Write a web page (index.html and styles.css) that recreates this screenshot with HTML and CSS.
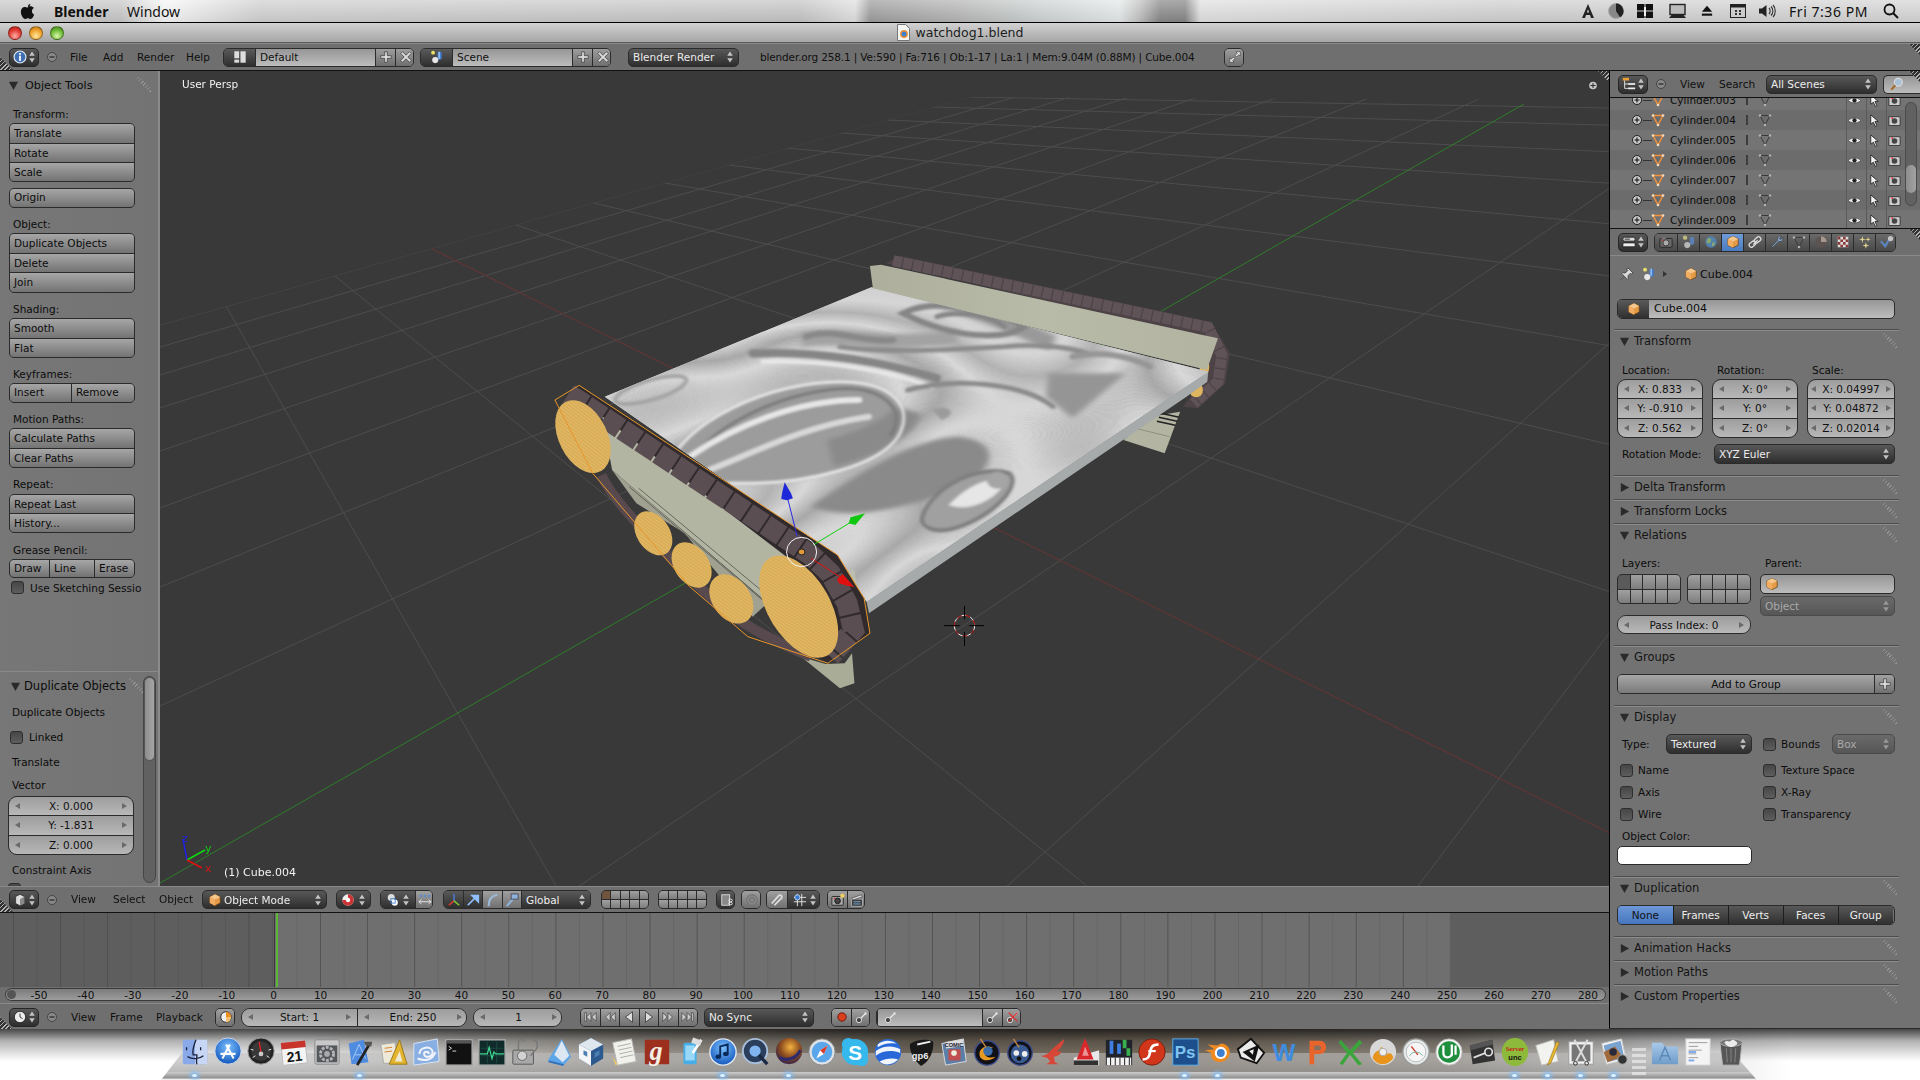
FILE: index.html
```html
<!DOCTYPE html>
<html lang="en">
<head>
<meta charset="utf-8">
<title>watchdog1.blend</title>
<link rel="stylesheet" href="styles.css">
</head>
<body>
<svg class="defs" width="0" height="0" aria-hidden="true">
  <defs>
    <pattern id="pWheel" width="7" height="7" patternUnits="userSpaceOnUse" patternTransform="rotate(62)"><rect width="7" height="7" fill="#dfb55f"/><path d="M0 2h7" stroke="#cd9d47" stroke-width="1.600"/><path d="M0 5h7" stroke="#e8c070" stroke-width="1.200"/></pattern>
    <linearGradient id="gRail" x1="0" y1="0" x2="1" y2="0"><stop offset="0" stop-color="#adaf9c"/><stop offset=".5" stop-color="#b9bba9"/><stop offset="1" stop-color="#b2b4a1"/></linearGradient>
    <linearGradient id="gFolder" x1="0" y1="0" x2="0" y2="1"><stop offset="0" stop-color="#a9c9ea"/><stop offset="1" stop-color="#6f9cc9"/></linearGradient>
    <radialGradient id="gBlue" cx=".5" cy=".35" r=".7"><stop offset="0" stop-color="#7cc0ff"/><stop offset="1" stop-color="#0b4fb8"/></radialGradient>
    <radialGradient id="gOrb" cx=".55" cy=".35" r=".7"><stop offset="0" stop-color="#f4b040"/><stop offset=".55" stop-color="#8a4a1e"/><stop offset="1" stop-color="#2a2050"/></radialGradient>
    <filter id="b3"><feGaussianBlur stdDeviation="3"/></filter>
    <filter id="b6"><feGaussianBlur stdDeviation="7"/></filter>
    <filter id="marble" x="0" y="0" width="100%" height="100%" color-interpolation-filters="sRGB">
      <feTurbulence type="fractalNoise" baseFrequency=".0024 .0032" numOctaves="1" seed="11"/>
      <feColorMatrix type="matrix" values="1 0 0 0 0  1 0 0 0 0  1 0 0 0 0  0 0 0 0 1"/>
      <feComponentTransfer>
        <feFuncR type="table" tableValues=".82 .82 .82 .8 .84 .7 .85 .66 .85 .72 .84 .82 .82"/>
        <feFuncG type="table" tableValues=".82 .82 .82 .8 .84 .7 .85 .66 .85 .72 .84 .82 .82"/>
        <feFuncB type="table" tableValues=".82 .82 .82 .8 .84 .7 .85 .66 .85 .72 .84 .82 .82"/>
      </feComponentTransfer>
    </filter>
    <clipPath id="sheetClip"><polygon points="175,470 725,142 1420,395 715,1085 660,960"/></clipPath>
    <clipPath id="gridClip"><polygon points="160,325 970,97 1609,100 1609,886 160,886"/></clipPath>

    <symbol id="ud" viewBox="0 0 10 16"><path d="M5 1l3.5 5.5h-7zM5 15l-3.5-5.500h7z" fill="#c4c4c4"/></symbol>
    <symbol id="udg" viewBox="0 0 10 16"><path d="M5 1l3.5 5.5h-7zM5 15l-3.5-5.500h7z" fill="#999"/></symbol>
    <symbol id="minus" viewBox="0 0 12 12"><circle cx="6" cy="6" r="4.500" fill="#888" stroke="#444"/><rect x="3.500" y="5.300" width="5" height="1.400" fill="#333"/></symbol>
    <symbol id="info" viewBox="0 0 16 16"><circle cx="8" cy="8" r="6.800" fill="#3f6fb0" stroke="#dfe8f5" stroke-width="1.300"/><rect x="7" y="3.500" width="2" height="2" fill="#fff"/><rect x="7" y="6.500" width="2" height="6" fill="#fff"/></symbol>
    <symbol id="layout" viewBox="0 0 16 16"><rect x="1.500" y="1.500" width="5.500" height="8" fill="#ddd"/><rect x="1.500" y="11" width="5.500" height="3.500" fill="#ddd"/><rect x="8.500" y="1.500" width="6" height="13" fill="#ddd"/></symbol>
    <symbol id="scene" viewBox="0 0 16 16"><circle cx="3.500" cy="3" r="2.200" fill="#e9e36b"/><rect x="8.500" y="2" width="5" height="9" rx="2" fill="#3f78c8"/><rect x="9.500" y="2" width="2" height="8" fill="#8fbaf0"/><circle cx="6" cy="11.500" r="3.500" fill="#e8e8e8"/></symbol>
    <symbol id="plus" viewBox="0 0 16 16"><path d="M6.500 2h3v4.500H14v3H9.500V14h-3V9.500H2v-3h4.500z" fill="#ddd" stroke="#333" stroke-width=".8"/></symbol>
    <symbol id="xx" viewBox="0 0 16 16"><path d="M4 2l4 4 4-4 2 2-4 4 4 4-2 2-4-4-4 4-2-2 4-4-4-4z" fill="#ddd" stroke="#333" stroke-width=".8"/></symbol>
    <symbol id="expand" viewBox="0 0 16 16"><path d="M9 2h5v5l-1.700-1.700-2.500 2.500-1.600-1.600 2.500-2.500zM7 14H2V9l1.700 1.700 2.500-2.500 1.600 1.600-2.500 2.500z" fill="#eee" stroke="#333" stroke-width=".7"/></symbol>
    <symbol id="triR" viewBox="0 0 12 12"><path d="M2 1l9 5-9 5z" fill="#2a2a2a"/></symbol>
    <symbol id="triD" viewBox="0 0 12 12"><path d="M1 2h10l-5 9z" fill="#2a2a2a"/></symbol>
    <symbol id="cube" viewBox="0 0 16 16"><path d="M2 4.500L8 1.500l6 3v7L8 14.500l-6-3z" fill="#e59a45" stroke="#5a3c18" stroke-width=".8"/><path d="M2 4.500l6 3 6-3-6-3z" fill="#f4c78d"/><path d="M8 7.500v7L2 11.500v-7z" fill="#f1ad62"/></symbol>
    <symbol id="cubeg" viewBox="0 0 16 16"><path d="M3 4L8 1.500 13 4v8l-5 2.500L3 12z" fill="#ddd" stroke="#222" stroke-width=".8"/><path d="M8 7v7.500L13 12V4z" fill="#888"/></symbol>
    <symbol id="plusc" viewBox="0 0 12 12"><circle cx="6" cy="6" r="4.500" fill="#c9c9c9" stroke="#222"/><path d="M3.500 6h5M6 3.500v5" stroke="#111" stroke-width="1.100"/></symbol>
    <symbol id="triO" viewBox="0 0 14 14"><path d="M2 2.500h10L7 12z" fill="none" stroke="#f0913a" stroke-width="1.500"/><circle cx="2" cy="2.500" r="1.300" fill="#f3dcc0"/><circle cx="12" cy="2.500" r="1.300" fill="#f3dcc0"/><circle cx="7" cy="12" r="1.300" fill="#f3dcc0"/></symbol>
    <symbol id="triG" viewBox="0 0 14 14"><path d="M2 2.500h10L7 12z" fill="none" stroke="#3a3a3a" stroke-width="1"/><circle cx="2" cy="2.500" r="1.200" fill="#b5b5b5"/><circle cx="12" cy="2.500" r="1.200" fill="#b5b5b5"/><circle cx="7" cy="12" r="1.200" fill="#b5b5b5"/></symbol>
    <symbol id="eye" viewBox="0 0 14 14"><path d="M0.500 7C3 3.500 11 3.500 13.500 7 11 10.500 3 10.500.5 7z" fill="#eee" stroke="#333" stroke-width=".6"/><circle cx="7" cy="7" r="2.300" fill="#222"/></symbol>
    <symbol id="cursor" viewBox="0 0 14 14"><path d="M3 1l8 7H7.500l2 4.500-1.700.800-2-4.500L3 11z" fill="#f4f4f4" stroke="#111" stroke-width=".8"/></symbol>
    <symbol id="rcam" viewBox="0 0 14 14"><rect x="1" y="3" width="12" height="9.500" fill="#ccc" stroke="#222" stroke-width=".8"/><circle cx="7" cy="7.500" r="3" fill="#444"/><circle cx="4.500" cy="4.500" r="1" fill="#d33"/></symbol>
    <symbol id="tabs" viewBox="0 0 16 16"><rect x="1" y="2.500" width="14" height="4.500" rx="2" fill="#ddd" stroke="#222"/><rect x="1" y="9" width="14" height="4.500" rx="1" fill="#eee" stroke="#222"/><rect x="3" y="4" width="6" height="1.500" fill="#555"/></symbol>
    <symbol id="outl" viewBox="0 0 16 16"><rect x="1" y="1" width="7" height="3" fill="#f0a030"/><path d="M3 4v9h4M3 8h4" stroke="#eee" fill="none"/><rect x="7" y="7" width="8" height="2" fill="#eee"/><rect x="7" y="12" width="8" height="2" fill="#eee"/></symbol>
    <symbol id="tcam" viewBox="0 0 16 16"><rect x="1" y="4" width="14" height="10" rx="1" fill="#6a6a6a" stroke="#222"/><rect x="3" y="2.500" width="5" height="2" fill="#777"/><circle cx="8" cy="9" r="3.500" fill="#aaa" stroke="#333"/><circle cx="4" cy="6" r=".8" fill="#d33"/></symbol>
    <symbol id="tscene" viewBox="0 0 16 16"><circle cx="3.500" cy="3" r="2.500" fill="#c9c47e" opacity=".9"/><rect x="9" y="2" width="5" height="9" rx="2" fill="#5a80b4"/><circle cx="6" cy="11.500" r="3.500" fill="#b8b8b8"/></symbol>
    <symbol id="tworld" viewBox="0 0 16 16"><circle cx="8" cy="8" r="6.500" fill="#5380ac"/><path d="M4 4c3-1 5 0 4 3s-4 3-5 1zM10 8c2 0 3 1 2 3s-3 2-3 0z" fill="#8aa86c"/></symbol>
    <symbol id="tlink" viewBox="0 0 16 16"><path d="M6 11l5-5" stroke="#ddd" stroke-width="1.500"/><rect x="1" y="8" width="8" height="5" rx="2.500" fill="none" stroke="#ddd" stroke-width="1.500" transform="rotate(-40 5 10.500)"/><rect x="7" y="3" width="8" height="5" rx="2.500" fill="none" stroke="#ddd" stroke-width="1.500" transform="rotate(-40 11 5.500)"/></symbol>
    <symbol id="twrench" viewBox="0 0 16 16"><path d="M2 13l7-7c-1-3 1-5 4-4.500L10.500 4l1.500 1.500 2.500-2.500c.5 3-1.500 5-4.500 4l-7 7z" fill="#8fb0da" stroke="#222" stroke-width=".5"/></symbol>
    <symbol id="tmat" viewBox="0 0 16 16"><circle cx="8" cy="8" r="6.500" fill="#5b5350"/><path d="M8 1.500A6.500 6.500 0 0 1 14.500 8H8z" fill="#a8988f"/></symbol>
    <symbol id="ttex" viewBox="0 0 16 16"><rect x="2" y="2" width="12" height="12" fill="#ddd"/><path d="M2 2h3v3H2zM8 2h3v3H8zM5 5h3v3H5zM11 5h3v3h-3zM2 8h3v3H2zM8 8h3v3H8zM5 11h3v3H5zM11 11h3v3h-3z" fill="#8b3a3a"/></symbol>
    <symbol id="tpart" viewBox="0 0 16 16"><path d="M5 1l.8 3.200L9 5l-3.200.8L5 9l-.8-3.200L1 5l3.200-.8zM11.500 2l.6 2.400 2.400.6-2.400.6-.6 2.400-.6-2.400L8.500 5l2.400-.6zM9 8l.8 3.200 3.200.8-3.200.8L9 16l-.8-3.200L5 12l3.200-.8z" fill="#e3d58f"/></symbol>
    <symbol id="tphys" viewBox="0 0 16 16"><path d="M1 7l5 6L11 4" fill="none" stroke="#5b86c0" stroke-width="2.500"/><circle cx="12" cy="4" r="3" fill="#c5c5c5"/></symbol>
    <symbol id="pin" viewBox="0 0 16 16"><path d="M9 1l6 6-2 1-1-1-3 3 .5 3-1 1-3-3-4 4-.5-.5 4-4-3-3 1-1 3 .5 3-3-1-1z" fill="#ddd" stroke="#222" stroke-width=".7"/></symbol>
    <symbol id="sphere" viewBox="0 0 16 16"><circle cx="8" cy="8" r="6.500" fill="#efefef"/><path d="M8 1.500a6.500 6.500 0 0 1 0 13zM1.500 8a6.500 6.500 0 0 0 6.500 6.500V8z" fill="#c33"/><circle cx="8" cy="8" r="2.500" fill="#fff"/></symbol>
    <symbol id="pivot" viewBox="0 0 16 16"><circle cx="6" cy="5" r="4" fill="#ddd"/><circle cx="10" cy="11" r="3.500" fill="#fff"/><rect x="5.500" y="6.500" width="5" height="5" fill="none" stroke="#3a7ad0"/></symbol>
    <symbol id="align" viewBox="0 0 16 16"><rect x="2" y="2" width="2.500" height="2.500" fill="#5a8ad0"/><rect x="6.700" y="2" width="2.500" height="2.500" fill="#5a8ad0"/><rect x="11.500" y="2" width="2.500" height="2.500" fill="#5a8ad0"/><path d="M1 10h14M1 10l3-2.500M1 10l3 2.500M15 10l-3-2.500M15 10l-3 2.500" stroke="#eee" fill="none"/></symbol>
    <symbol id="manip" viewBox="0 0 16 16"><path d="M8 9V1" stroke="#4a7be0" stroke-width="1.600"/><path d="M8 9L2 14" stroke="#e03a2a" stroke-width="1.600"/><path d="M8 9l6 5" stroke="#7cd030" stroke-width="1.600"/></symbol>
    <symbol id="arrowm" viewBox="0 0 16 16"><path d="M2 14L10 6M7 3h7v7z" stroke="#8fc0ff" fill="#8fc0ff" stroke-width="2"/></symbol>
    <symbol id="rotm" viewBox="0 0 16 16"><path d="M3 15C3 8 6 3 13 2" fill="none" stroke="#9ab8d8" stroke-width="2.500"/></symbol>
    <symbol id="scalem" viewBox="0 0 16 16"><path d="M2 15L9 7" stroke="#8fb2dc" stroke-width="2.500"/><rect x="7" y="1" width="8" height="6" fill="#8fb2dc" stroke="#445"/></symbol>
    <symbol id="lock3d" viewBox="0 0 16 16"><rect x="2" y="2" width="9" height="12" fill="#888" stroke="#ddd"/><rect x="10" y="7" width="4" height="3" rx="1.500" fill="none" stroke="#eee"/><rect x="10" y="10.500" width="4" height="3" rx="1.500" fill="none" stroke="#eee"/></symbol>
    <symbol id="prop" viewBox="0 0 16 16"><circle cx="8" cy="8" r="6" fill="#8a8a8a" stroke="#777" stroke-width="1.500"/><circle cx="8" cy="8" r="2.800" fill="none" stroke="#666"/></symbol>
    <symbol id="magnet" viewBox="0 0 16 16"><path d="M3 13L11 4c3-2 5 2 2 4l-7 7" fill="none" stroke="#ddd" stroke-width="2" transform="translate(-1 -1)"/></symbol>
    <symbol id="snap" viewBox="0 0 16 16"><path d="M5 1v14M10 1v14M1 5h14M1 10h14" stroke="#eee"/><circle cx="5" cy="5" r="3" fill="#3a7ad0" stroke="#cde"/></symbol>
    <symbol id="renderc" viewBox="0 0 16 16"><rect x="1" y="4" width="13" height="10" rx="1" fill="#aaa" stroke="#222"/><circle cx="7.500" cy="9" r="3.200" fill="#444" stroke="#111"/><circle cx="4" cy="6" r="1" fill="#d33"/><circle cx="13" cy="3" r="2.500" fill="#ecd060"/></symbol>
    <symbol id="clap" viewBox="0 0 16 16"><rect x="2" y="7" width="12" height="8" fill="#3d3d3d" stroke="#ddd" stroke-width=".6"/><path d="M2 6l11-4 1 2.500L3 8z" fill="#ddd" stroke="#222" stroke-width=".6"/><path d="M4 10h8M4 12.500h8" stroke="#7ab0e0"/></symbol>
    <symbol id="clock" viewBox="0 0 16 16"><circle cx="8" cy="8" r="6.500" fill="#eee" stroke="#222"/><path d="M8 4v4l3 2" stroke="#222" fill="none"/></symbol>
    <symbol id="pie" viewBox="0 0 16 16"><circle cx="8" cy="8" r="6" fill="#eee" stroke="#222"/><path d="M8 2a6 6 0 0 1 6 6H8z" fill="#ee9020"/><path d="M8 8h6a6 6 0 0 1-6 6z" fill="#f3c070"/></symbol>
    <symbol id="tfirst" viewBox="0 0 16 16"><path d="M2 3h2v10H2zM9 3v10L4 8zM15 3v10L10 8z" fill="#ccc" stroke="#222" stroke-width=".6"/></symbol>
    <symbol id="tprev" viewBox="0 0 16 16"><path d="M8 3v10L3 8zM14 3v10L9 8z" fill="#ccc" stroke="#222" stroke-width=".6"/></symbol>
    <symbol id="tback" viewBox="0 0 16 16"><path d="M12 2v12L4 8z" fill="#ddd" stroke="#222" stroke-width=".8"/></symbol>
    <symbol id="tplay" viewBox="0 0 16 16"><path d="M4 2v12l8-6z" fill="#ddd" stroke="#222" stroke-width=".8"/></symbol>
    <symbol id="tnext" viewBox="0 0 16 16"><path d="M8 3v10l5-5zM2 3v10l5-5z" fill="#ccc" stroke="#222" stroke-width=".6"/></symbol>
    <symbol id="tlast" viewBox="0 0 16 16"><path d="M12 3h2v10h-2zM7 3v10l5-5zM1 3v10l5-5z" fill="#ccc" stroke="#222" stroke-width=".6"/></symbol>
    <symbol id="rec" viewBox="0 0 16 16"><circle cx="8" cy="8" r="4.800" fill="#d8401c" stroke="#611"/></symbol>
    <symbol id="key" viewBox="0 0 16 16"><circle cx="4.500" cy="11.500" r="3" fill="#444" stroke="#eee"/><path d="M7 9l6-6M11 3l2 2" stroke="#eee" stroke-width="1.500"/></symbol>
    <symbol id="keyx" viewBox="0 0 16 16"><circle cx="4.500" cy="11.500" r="3" fill="#444" stroke="#eee"/><path d="M7 9l6-6" stroke="#eee" stroke-width="1.500"/><path d="M3 3l10 10M13 3L3 13" stroke="#d33" stroke-width="1.500"/></symbol>
    <symbol id="search" viewBox="0 0 16 16"><circle cx="9.500" cy="6" r="4.500" fill="#a8c0d8" stroke="#d9d9d9" stroke-width="1.400"/><path d="M6 9.500L1.500 14.500" stroke="#a56a2a" stroke-width="2.400"/></symbol>
  </defs>
</svg>

<div class="screen">
  <header class="menubar">
    <svg class="apple" viewBox="0 0 16 18"><path d="M11 1c-1.500.2-2.700 1.500-2.600 3 1.500 0 2.700-1.400 2.600-3zM8.300 5C7 5 6.300 4.300 5 4.300 3 4.300.9 6 .9 9.300c0 3.500 2.500 7.700 4.500 7.700 1.200 0 1.700-.8 3-.8s1.700.8 3 .8c1.600 0 3.100-2.600 3.700-4.700-3-1.300-3.200-5.600-.2-7-1-1.400-2.500-1.900-3.700-1.900-1.200 0-2.100.700-2.900.700z" fill="#111"/></svg>
    <span class="mb-app">Blender</span>
    <span class="mb-item">Window</span>
    <span class="mb-right">
      <svg class="mb-i a5" viewBox="0 0 16 16"><path d="M8 1L2 15h3l1-3h4l1 3h3z" fill="#222"/><path d="M8 6l-1.200 3.500h2.400z" fill="#ccc"/></svg>
      <svg class="mb-i a6" viewBox="0 0 16 16"><circle cx="8" cy="8" r="7.500" fill="#888" stroke="#aaa"/><path d="M8 .5a7.500 7.500 0 0 1 4 13.800L8 8z" fill="#222"/></svg>
      <svg class="mb-i a7" viewBox="0 0 16 16"><rect x="0" y="1" width="7.500" height="6.500" fill="#111"/><rect x="8.500" y="1" width="7.500" height="6.500" fill="#111"/><rect x="0" y="8.500" width="7.500" height="6.500" fill="#111"/><rect x="8.500" y="8.500" width="7.500" height="6.500" fill="#111"/><rect x="7" y="4" width="2" height="9" fill="#eee"/></svg>
      <svg class="mb-i a8" viewBox="0 0 17 16"><rect x="1" y="1.500" width="15" height="10" fill="#bbb" stroke="#222" stroke-width="1.400"/><path d="M0 15l2.500-3h12L17 15z" fill="#222"/></svg>
      <svg class="mb-i a9" viewBox="0 0 14 16"><path d="M7 2l6 7H1z" fill="#111"/><rect x="1" y="11" width="12" height="2.500" fill="#111"/></svg>
      <svg class="mb-i a10" viewBox="0 0 16 16"><rect x=".5" y="1.500" width="15" height="13" fill="#ccc" stroke="#222"/><rect x="1" y="2" width="14" height="2.500" fill="#222"/><path d="M5 7h2v2H5zM9 7h2v2H9zM5 10h2v2H5zM9 10h2v2H9z" fill="#333"/></svg>
      <svg class="mb-i a11" viewBox="0 0 18 16"><path d="M1 5.500h3L8.500 2v12L4 10.500H1z" fill="#222"/><path d="M11 5c1.500 1.500 1.500 4.500 0 6M13 3.500c2.500 2.500 2.500 6.500 0 9M15 2c3 3 3 9 0 12" fill="none" stroke="#333" stroke-width="1.100"/></svg>
      <span class="mb-clock">Fri 7:36 PM</span>
      <svg class="mb-i a12" viewBox="0 0 16 16"><circle cx="6.500" cy="6.500" r="5" fill="none" stroke="#111" stroke-width="1.800"/><path d="M10 10l5 5" stroke="#111" stroke-width="2"/></svg>
    </span>
  </header>

  <main class="window">
    <div class="titlebar">
      <span class="lights"><i class="lt red"></i><i class="lt amber"></i><i class="lt green"></i></span>
      <span class="title">
        <svg class="fileic" viewBox="0 0 13 17"><path d="M.5.5h8l4 4v12H.5z" fill="#f4f4f4" stroke="#777"/><circle cx="7" cy="10" r="3.200" fill="#3f7fd0" stroke="#ef9030" stroke-width="1.400"/></svg>
        watchdog1.blend
      </span>
    </div>

    <div class="hdr hatch-b">
      <button class="sel"><svg class="i14"><use href="#info"/></svg><svg class="ud"><use href="#ud"/></svg></button>
      <svg class="mn"><use href="#minus"/></svg>
      <span class="mi w33 ml12">File</span><span class="mi w34">Add</span><span class="mi w49">Render</span><span class="mi w37">Help</span>
      <span class="wg w191">
        <span class="ic dark w31"><svg class="i14"><use href="#layout"/></svg></span>
        <span class="txt w120">Default</span>
        <span class="ic lite w20"><svg class="i14"><use href="#plus"/></svg></span>
        <span class="ic lite w20"><svg class="i14"><use href="#xx"/></svg></span>
      </span>
      <span class="wg w191 ml6">
        <span class="ic dark w31"><svg class="i14"><use href="#scene"/></svg></span>
        <span class="txt w120">Scene</span>
        <span class="ic lite w20"><svg class="i14"><use href="#plus"/></svg></span>
        <span class="ic lite w20"><svg class="i14"><use href="#xx"/></svg></span>
      </span>
      <span class="wg drop w111 ml17"><span class="dl">Blender Render</span><svg class="ud"><use href="#ud"/></svg></span>
      <span class="stats">blender.org 258.1 | Ve:590 | Fa:716 | Ob:1-17 | La:1 | Mem:9.04M (0.88M) | Cube.004</span>
      <span class="wg w20"><span class="ic lite w20"><svg class="i14"><use href="#expand"/></svg></span></span>
      <i class="hatch-tr"></i>
    </div>

    <div class="work">
      <div class="work-left">
        <div class="view-row">
          <aside class="tools">
            <section class="tool-top">
              <div class="tool-head"><svg class="i11"><use href="#triD"/></svg><span>Object Tools</span><i class="grip"></i></div>
              <div class="tsec first"><div class="tlab">Transform:</div><div class="bgroup"><div class="tb">Translate</div><div class="tb">Rotate</div><div class="tb">Scale</div></div></div>
              <div class="bgroup single origin"><div class="tb">Origin</div></div>
              <div class="tsec"><div class="tlab">Object:</div><div class="bgroup"><div class="tb">Duplicate Objects</div><div class="tb">Delete</div><div class="tb">Join</div></div></div>
              <div class="tsec"><div class="tlab">Shading:</div><div class="bgroup"><div class="tb">Smooth</div><div class="tb">Flat</div></div></div>
              <div class="tsec"><div class="tlab">Keyframes:</div><div class="bgroup row"><div class="tb k1">Insert</div><div class="tb k2">Remove</div></div></div>
              <div class="tsec"><div class="tlab">Motion Paths:</div><div class="bgroup"><div class="tb">Calculate Paths</div><div class="tb">Clear Paths</div></div></div>
              <div class="tsec"><div class="tlab">Repeat:</div><div class="bgroup"><div class="tb">Repeat Last</div><div class="tb">History...</div></div></div>
              <div class="tsec"><div class="tlab">Grease Pencil:</div><div class="bgroup row"><div class="tb g1">Draw</div><div class="tb g2">Line</div><div class="tb g3">Erase</div></div></div>
              <label class="chk-row sketch"><i class="chk"></i><span>Use Sketching Sessio</span></label>
            </section>
            <section class="tool-bot">
              <div class="bot-main">
                <div class="tool-head sub"><svg class="i11"><use href="#triD"/></svg><span class="big">Duplicate Objects</span><i class="grip"></i></div>
                <div class="bline t">Duplicate Objects</div>
                <label class="bline chk-row"><i class="chk"></i><span>Linked</span></label>
                <div class="bline t">Translate</div>
                <div class="bline t vec">Vector</div>
                <div class="nstack"><div class="num"><span>X: 0.000</span></div><div class="num"><span>Y: -1.831</span></div><div class="num"><span>Z: 0.000</span></div></div>
                <div class="bline t con">Constraint Axis</div>
                <i class="chk"></i>
              </div>
              <div class="vscroll"><i class="vthumb"></i></div>
            </section>
          </aside>

          <div class="viewport">
            <svg class="scene3d" viewBox="160 71 1449 815">
              <g clip-path="url(#gridClip)" stroke="#4d4d4d" stroke-width="1">
                <line x1="160" y1="325" x2="2298" y2="-278"/><line x1="160" y1="347" x2="2298" y2="-278"/><line x1="160" y1="375" x2="2298" y2="-278"/><line x1="160" y1="408" x2="2298" y2="-278"/><line x1="160" y1="451" x2="2298" y2="-278"/><line x1="160" y1="508" x2="2298" y2="-278"/><line x1="160" y1="587" x2="2298" y2="-278"/><line x1="160" y1="706" x2="2298" y2="-278"/>
                <line x1="160" y1="1170" x2="2298" y2="-278"/><line x1="160" y1="1650" x2="2298" y2="-278"/><line x1="160" y1="2550" x2="2298" y2="-278"/>
                <line x1="226" y1="306" x2="730" y2="1192"/><line x1="335" y1="276" x2="1745" y2="1420"/><line x1="516" y1="225" x2="2180" y2="783"/><line x1="594" y1="203" x2="2570" y2="673"/><line x1="665" y1="183" x2="2360" y2="475"/><line x1="729" y1="165" x2="2616" y2="403"/><line x1="787" y1="148" x2="2848" y2="338"/><line x1="840" y1="133" x2="3060" y2="278"/><line x1="888" y1="120" x2="3252" y2="224"/><line x1="932" y1="107" x2="3428" y2="174"/><line x1="970" y1="97" x2="3580" y2="142"/>
                <line x1="430" y1="248" x2="1680" y2="868" stroke="#693434"/>
                <line x1="160" y1="883" x2="1524" y2="104" stroke="#2f7d2a"/>
              </g>

              <g transform="translate(520 240) scale(.4847 .3333)">
                <path d="M755 70L785 48 1425 245 1465 340 1455 430 1400 505 1368 500 1415 410 1430 300z" fill="#4d4346"/>
                <path d="M770 62L1420 262 1448 345 1440 425 1390 490" fill="none" stroke="#5f5357" stroke-width="11" stroke-dasharray="9 1.200" vector-effect="non-scaling-stroke"/>
                <ellipse cx="1412" cy="380" rx="10" ry="28" fill="#e0b55f"/><ellipse cx="1395" cy="450" rx="14" ry="22" fill="#e0b55f"/>
                <polygon points="1245,600 1330,640 1362,515 1300,530" fill="#b3b5a2"/>
                <path d="M1322 520l38 12M1318 532l38 12M1314 544l38 12" stroke="#222" stroke-width="1.600" vector-effect="non-scaling-stroke"/>
                <path d="M1270 565l70 25" stroke="#8f917f" stroke-width="1" vector-effect="non-scaling-stroke"/>

                <polygon points="1420,395 1418,425 1375,470 720,1120 715,1085" fill="#a6aaaa"/>
                <polygon points="175,470 725,142 1420,395 715,1085 660,960" fill="#cbcbcb"/>
                <g clip-path="url(#sheetClip)">
                  <rect x="150" y="120" width="1300" height="1000" fill="#fff" filter="url(#marble)"/>
                  <g filter="url(#b6)">
                    <path d="M600 800C700 700 800 600 900 590 1010 600 980 720 860 770 760 810 690 840 600 800z" fill="#8a8a8a"/>
                    <path d="M300 700C330 540 520 425 660 425 770 425 815 500 780 590 740 680 590 730 480 730 390 730 300 730 300 700z" fill="#9c9c9c"/>
                    <path d="M1090 400L1250 400 1140 535 1085 470z" fill="#959595"/>
                    <path d="M640 640C720 610 790 560 800 510" fill="none" stroke="#8a8a8a" stroke-width="28" vector-effect="non-scaling-stroke"/>
                    <path d="M870 180C1000 240 1050 280 1100 310" fill="none" stroke="#999" stroke-width="16" vector-effect="non-scaling-stroke"/>
                    <path d="M580 300C680 280 780 320 900 290" fill="none" stroke="#a2a2a2" stroke-width="14" vector-effect="non-scaling-stroke"/>
                  </g>
                  <g filter="url(#b3)" fill="none" stroke-linecap="round">
                    <path d="M300 700C330 540 520 425 660 425 770 425 815 500 780 590 740 680 590 730 480 730 390 730 300 730 300 700z" stroke="#e6e6e6" stroke-width="3" vector-effect="non-scaling-stroke"/>
                    <path d="M330 715C360 590 520 455 670 445 750 445 800 510 765 585" stroke="#7a7a7a" stroke-width="3" vector-effect="non-scaling-stroke"/>
                    <path d="M350 650C440 560 570 480 700 480" stroke="#e6e6e6" stroke-width="6" vector-effect="non-scaling-stroke"/>
                    <path d="M390 690C480 640 580 560 720 530" stroke="#d8d8d8" stroke-width="6" vector-effect="non-scaling-stroke"/>
                    <path d="M480 340C620 330 760 370 860 415" stroke="#858585" stroke-width="8" vector-effect="non-scaling-stroke"/>
                    <path d="M500 365C620 360 740 385 850 440" stroke="#e8e8e8" stroke-width="4" vector-effect="non-scaling-stroke"/>
                    <path d="M800 450C900 410 1040 430 1100 500" stroke="#8a8a8a" stroke-width="5" vector-effect="non-scaling-stroke"/>
                    <path d="M830 830C850 740 950 670 1010 700 1040 740 960 850 880 870 850 875 825 860 830 830z" fill="#a0a0a0" stroke="#7e7e7e" stroke-width="4" vector-effect="non-scaling-stroke"/>
                    <path d="M885 795C920 740 970 705 1000 725 990 770 930 820 885 795z" fill="#e6e6e6" stroke="#d0d0d0" stroke-width="1" vector-effect="non-scaling-stroke"/>
                    <ellipse cx="985" cy="720" rx="22" ry="26" fill="#a5a5a5" stroke="none"/>
                    <ellipse cx="270" cy="450" rx="80" ry="28" transform="rotate(-25 270 450)" stroke="#a4a4a4" stroke-width="4" vector-effect="non-scaling-stroke"/>
                    <path d="M790 220C840 180 960 190 1040 260 1000 300 900 300 790 220z" stroke="#858585" stroke-width="6" vector-effect="non-scaling-stroke"/>
                    <path d="M860 230C900 210 970 225 1000 260" stroke="#858585" stroke-width="5" vector-effect="non-scaling-stroke"/>
                    <path d="M590 290C650 260 700 310 770 300" stroke="#888" stroke-width="6" vector-effect="non-scaling-stroke"/>
                    <path d="M660 320C760 340 880 330 1000 320 1060 310 1130 320 1170 340" stroke="#8c8c8c" stroke-width="5" vector-effect="non-scaling-stroke"/>
                    <path d="M1140 350C1200 330 1260 350 1300 380" stroke="#969696" stroke-width="6" vector-effect="non-scaling-stroke"/>
                    <path d="M850 510C880 490 910 520 870 540z" fill="#9b9b9b" stroke="none"/>
                  </g>
                </g>
                <polygon points="722,78 745,74 1440,295 1417,390 728,145" fill="url(#gRail)"/>

                <polygon points="580,1250 660,1345 690,1330 685,1240 670,1270 630,1272" fill="#a9ac97"/>
                <polygon points="655,985 690,990 696,1045 670,1045" fill="#bcbeb0"/>
                <polygon points="165,490 600,960 520,1100 190,690" fill="#b3b5a3"/>
                <polygon points="190,690 510,1090 480,1130 340,880 240,790" fill="#a0a191"/>
                <path d="M225 740L500 1080M245 745L505 1060" stroke="#66675c" stroke-width="1" vector-effect="non-scaling-stroke"/>
                <path d="M168 705C190 780 260 880 370 1040 420 1110 460 1165 600 1250" fill="none" stroke="#57494d" stroke-width="10" vector-effect="non-scaling-stroke"/>
                <path d="M100 452L122 437 655 945 710 1075 722 1180 640 1270 610 1250 655 1190 640 1070 570 975 545 945z" fill="#302a2d"/>
                <path d="M100 462L600 945 640 1000 675 1090 688 1170 640 1250" fill="none" stroke="#5a4e52" stroke-width="21" stroke-dasharray="19.500 2" vector-effect="non-scaling-stroke"/>
                <ellipse cx="130" cy="590" rx="52" ry="112" transform="rotate(-14 130 590)" fill="url(#pWheel)"/>
                <ellipse cx="575" cy="1100" rx="68" ry="160" transform="rotate(-18 575 1100)" fill="url(#pWheel)"/>
                <ellipse cx="275" cy="880" rx="36" ry="68" transform="rotate(-16 275 880)" fill="url(#pWheel)"/>
                <ellipse cx="354" cy="975" rx="38" ry="70" transform="rotate(-16 354 975)" fill="url(#pWheel)"/>
                <ellipse cx="436" cy="1077" rx="42" ry="76" transform="rotate(-16 436 1077)" fill="url(#pWheel)"/>
                <polygon points="72,480 122,436 655,945 710,1075 722,1180 635,1270 470,1190 350,1040 150,700" fill="none" stroke="#e8962a" stroke-width="1" vector-effect="non-scaling-stroke"/>

                <g>
                  <path d="M572 890L547 745" stroke="#2a2ae0" stroke-width="1" vector-effect="non-scaling-stroke"/>
                  <path d="M546 727l-5 30-2 20 12 4 12-6-4-15z" fill="#1e28d8"/>
                  <path d="M605 915L690 840" stroke="#10d010" stroke-width="1" vector-effect="non-scaling-stroke"/>
                  <path d="M712 820l-30 12-4 18 14 5z" fill="#10c810"/>
                  <path d="M600 955L665 1015" stroke="#e01010" stroke-width="1" vector-effect="non-scaling-stroke"/>
                  <path d="M690 1042l-24-40-12 16 4 12 14 6z" fill="#e01010"/>
                  <ellipse cx="581" cy="936" rx="31" ry="44" fill="none" stroke="#f4f4f4" stroke-width="1" vector-effect="non-scaling-stroke"/>
                  <ellipse cx="581" cy="936" rx="7" ry="9" fill="#e39a3a" stroke="#222" stroke-width="1" vector-effect="non-scaling-stroke"/>
                </g>
                <g>
                  <ellipse cx="917" cy="1157" rx="21" ry="31" fill="none" stroke="#f0f0f0" stroke-width="1" stroke-dasharray="5 4" vector-effect="non-scaling-stroke"/>
                  <ellipse cx="917" cy="1157" rx="21" ry="31" fill="none" stroke="#d01818" stroke-width="1" stroke-dasharray="5 4" stroke-dashoffset="5" vector-effect="non-scaling-stroke"/>
                  <path d="M875 1157h32M927 1157h30M917 1098v40M917 1176v42" stroke="#000" stroke-width="1" vector-effect="non-scaling-stroke"/>
                </g>
              </g>

              <g fill="none" stroke-width="1.500"><path d="M187 860L183 839" stroke="#2020e8"/><path d="M187 860L205 850" stroke="#10d810"/><path d="M187 860L202 868" stroke="#e01010"/></g>
              <circle cx="1593" cy="85.500" r="3.800" fill="#c8c8c8"/><path d="M1590.500 85.500h5M1593 83v5" stroke="#2a2a2a" stroke-width="1"/>
            </svg>
            <span class="vp-label persp">User Persp</span>
            <span class="vp-label obj">(1) Cube.004</span>
            <span class="vp-axis az">z</span><span class="vp-axis ay">y</span><span class="vp-axis ax">x</span>
            <i class="hatch-tr"></i>
          </div>
        </div>

        <div class="hdr h3d hatch-b">
          <button class="sel"><svg class="i14"><use href="#cubeg"/></svg><svg class="ud"><use href="#ud"/></svg></button>
          <svg class="mn"><use href="#minus"/></svg>
          <span class="mi w42 ml13">View</span><span class="mi w46">Select</span><span class="mi w43">Object</span>
          <span class="wg drop w125"><svg class="i14 lead"><use href="#cube"/></svg><span class="dl">Object Mode</span><svg class="ud"><use href="#ud"/></svg></span>
          <span class="wg drop w35 ml9"><svg class="i14"><use href="#sphere"/></svg><svg class="ud"><use href="#ud"/></svg></span>
          <span class="wg w53 ml9"><span class="ic dark w34 cgap"><svg class="i14"><use href="#pivot"/></svg><svg class="ud"><use href="#ud"/></svg></span><span class="ic mid w19"><svg class="i14"><use href="#align"/></svg></span></span>
          <span class="wg w148 ml10"><span class="ic dark w19"><svg class="i14"><use href="#manip"/></svg></span><span class="ic dark w19"><svg class="i14"><use href="#arrowm"/></svg></span><span class="ic mid w20"><svg class="i14"><use href="#rotm"/></svg></span><span class="ic mid w19"><svg class="i14"><use href="#scalem"/></svg></span><span class="ic dark dropin"><span class="dl">Global</span><svg class="ud"><use href="#ud"/></svg></span></span>
          <span class="layers w48 ml10"><i class="on"></i><i></i><i></i><i></i><i></i><i></i><i></i><i></i><i></i><i></i></span>
          <span class="layers w49 ml9"><i></i><i></i><i></i><i></i><i></i><i></i><i></i><i></i><i></i><i></i></span>
          <span class="wg w19 ml9"><span class="ic dark w19"><svg class="i14"><use href="#lock3d"/></svg></span></span>
          <span class="wg w20 ml6"><span class="ic mid w20"><svg class="i14"><use href="#prop"/></svg></span></span>
          <span class="wg w54 ml5"><span class="ic mid w20"><svg class="i14"><use href="#magnet"/></svg></span><span class="ic dark w34 cgap"><svg class="i14"><use href="#snap"/></svg><svg class="ud"><use href="#ud"/></svg></span></span>
          <span class="wg w38 ml7"><span class="ic mid w19"><svg class="i14"><use href="#renderc"/></svg></span><span class="ic mid w19"><svg class="i14"><use href="#clap"/></svg></span></span>
        </div>

        <div class="timeline">
          <div class="tl-before"></div><div class="tl-cur"></div><div class="tl-range"></div><div class="tl-after"></div>
        </div>
        <div class="ruler">
          <i class="rbar"></i>
          <span>-50</span><span>-40</span><span>-30</span><span>-20</span><span>-10</span><span>0</span><span>10</span><span>20</span><span>30</span><span>40</span><span>50</span><span>60</span><span>70</span><span>80</span><span>90</span><span>100</span><span>110</span><span>120</span><span>130</span><span>140</span><span>150</span><span>160</span><span>170</span><span>180</span><span>190</span><span>200</span><span>210</span><span>220</span><span>230</span><span>240</span><span>250</span><span>260</span><span>270</span><span>280</span>
        </div>
        <div class="hdr htl hatch-b">
          <button class="sel"><svg class="i14"><use href="#clock"/></svg><svg class="ud"><use href="#ud"/></svg></button>
          <svg class="mn"><use href="#minus"/></svg>
          <span class="mi w39 ml13">View</span><span class="mi w46">Frame</span><span class="mi w59">Playback</span>
          <span class="wg w20"><span class="ic mid w20"><svg class="i14"><use href="#pie"/></svg></span></span>
          <span class="nrow w226 ml6"><span class="num cell w115"><span>Start: 1</span></span><span class="num cell w111"><span>End: 250</span></span></span>
          <span class="nrow w89 ml6"><span class="num cell w89"><span>1</span></span></span>
          <span class="wg w118 ml18 transport"><span class="ic mid"><svg class="i14"><use href="#tfirst"/></svg></span><span class="ic mid"><svg class="i14"><use href="#tprev"/></svg></span><span class="ic mid"><svg class="i14"><use href="#tback"/></svg></span><span class="ic mid"><svg class="i14"><use href="#tplay"/></svg></span><span class="ic mid"><svg class="i14"><use href="#tnext"/></svg></span><span class="ic mid"><svg class="i14"><use href="#tlast"/></svg></span></span>
          <span class="wg drop w110 ml6"><span class="dl">No Sync</span><svg class="ud"><use href="#ud"/></svg></span>
          <span class="wg w39 ml17"><span class="ic mid w19"><svg class="i14"><use href="#rec"/></svg></span><span class="ic mid w20"><svg class="i14"><use href="#key"/></svg></span></span>
          <span class="wg w145 ml6"><span class="txt lead-key w105"><svg class="i14"><use href="#key"/></svg></span><span class="ic mid w20"><svg class="i14"><use href="#key"/></svg></span><span class="ic mid w20"><svg class="i14"><use href="#keyx"/></svg></span></span>
        </div>
      </div>

      <div class="work-right">
        <div class="hdr houtl">
          <button class="sel"><svg class="i14"><use href="#outl"/></svg><svg class="ud"><use href="#ud"/></svg></button>
          <svg class="mn"><use href="#minus"/></svg>
          <span class="mi w39 ml13">View</span><span class="mi w47">Search</span>
          <span class="wg drop w111"><span class="dl">All Scenes</span><svg class="ud"><use href="#ud"/></svg></span>
          <span class="searchf"><svg class="i14"><use href="#search"/></svg></span>
          <i class="hatch-tr"></i>
        </div>
        <div class="outliner">
          <div class="orow"><svg class="oplus"><use href="#plusc"/></svg><i class="ocon"></i><svg class="otri"><use href="#triO"/></svg><span class="oname">Cylinder.003</span><i class="otick"></i><svg class="ogray"><use href="#triG"/></svg><span class="ocell"><svg class="i13"><use href="#eye"/></svg></span><span class="ocell"><svg class="i13"><use href="#cursor"/></svg></span><span class="ocell"><svg class="i13"><use href="#rcam"/></svg></span></div>
          <div class="orow"><svg class="oplus"><use href="#plusc"/></svg><i class="ocon"></i><svg class="otri"><use href="#triO"/></svg><span class="oname">Cylinder.004</span><i class="otick"></i><svg class="ogray"><use href="#triG"/></svg><span class="ocell"><svg class="i13"><use href="#eye"/></svg></span><span class="ocell"><svg class="i13"><use href="#cursor"/></svg></span><span class="ocell"><svg class="i13"><use href="#rcam"/></svg></span></div>
          <div class="orow"><svg class="oplus"><use href="#plusc"/></svg><i class="ocon"></i><svg class="otri"><use href="#triO"/></svg><span class="oname">Cylinder.005</span><i class="otick"></i><svg class="ogray"><use href="#triG"/></svg><span class="ocell"><svg class="i13"><use href="#eye"/></svg></span><span class="ocell"><svg class="i13"><use href="#cursor"/></svg></span><span class="ocell"><svg class="i13"><use href="#rcam"/></svg></span></div>
          <div class="orow"><svg class="oplus"><use href="#plusc"/></svg><i class="ocon"></i><svg class="otri"><use href="#triO"/></svg><span class="oname">Cylinder.006</span><i class="otick"></i><svg class="ogray"><use href="#triG"/></svg><span class="ocell"><svg class="i13"><use href="#eye"/></svg></span><span class="ocell"><svg class="i13"><use href="#cursor"/></svg></span><span class="ocell"><svg class="i13"><use href="#rcam"/></svg></span></div>
          <div class="orow"><svg class="oplus"><use href="#plusc"/></svg><i class="ocon"></i><svg class="otri"><use href="#triO"/></svg><span class="oname">Cylinder.007</span><i class="otick"></i><svg class="ogray"><use href="#triG"/></svg><span class="ocell"><svg class="i13"><use href="#eye"/></svg></span><span class="ocell"><svg class="i13"><use href="#cursor"/></svg></span><span class="ocell"><svg class="i13"><use href="#rcam"/></svg></span></div>
          <div class="orow"><svg class="oplus"><use href="#plusc"/></svg><i class="ocon"></i><svg class="otri"><use href="#triO"/></svg><span class="oname">Cylinder.008</span><i class="otick"></i><svg class="ogray"><use href="#triG"/></svg><span class="ocell"><svg class="i13"><use href="#eye"/></svg></span><span class="ocell"><svg class="i13"><use href="#cursor"/></svg></span><span class="ocell"><svg class="i13"><use href="#rcam"/></svg></span></div>
          <div class="orow"><svg class="oplus"><use href="#plusc"/></svg><i class="ocon"></i><svg class="otri"><use href="#triO"/></svg><span class="oname">Cylinder.009</span><i class="otick"></i><svg class="ogray"><use href="#triG"/></svg><span class="ocell"><svg class="i13"><use href="#eye"/></svg></span><span class="ocell"><svg class="i13"><use href="#cursor"/></svg></span><span class="ocell"><svg class="i13"><use href="#rcam"/></svg></span></div>
          <div class="oscroll"><i class="othumb"></i></div>
        </div>

        <div class="hdr hprop">
          <button class="sel"><svg class="i14"><use href="#tabs"/></svg><svg class="ud"><use href="#ud"/></svg></button>
          <span class="wg ptabs ml6">
            <span class="ptab"><svg class="i14"><use href="#tcam"/></svg></span><span class="ptab"><svg class="i14"><use href="#tscene"/></svg></span><span class="ptab"><svg class="i14"><use href="#tworld"/></svg></span><span class="ptab on"><svg class="i14"><use href="#cube"/></svg></span><span class="ptab"><svg class="i14"><use href="#tlink"/></svg></span><span class="ptab"><svg class="i14"><use href="#twrench"/></svg></span><span class="ptab"><svg class="i14"><use href="#triG"/></svg></span><span class="ptab"><svg class="i14"><use href="#tmat"/></svg></span><span class="ptab"><svg class="i14"><use href="#ttex"/></svg></span><span class="ptab"><svg class="i14"><use href="#tpart"/></svg></span><span class="ptab"><svg class="i14"><use href="#tphys"/></svg></span>
          </span>
          <i class="hatch-tr"></i>
        </div>

        <div class="props">
          <div class="crumb">
            <svg class="i14 c1"><use href="#pin"/></svg>
            <svg class="i14 c2"><use href="#scene"/></svg>
            <i class="c3"></i>
            <svg class="i14 c4"><use href="#cube"/></svg>
            <span>Cube.004</span>
          </div>
          <div class="namef"><span class="ic dark w31"><svg class="i14"><use href="#cube"/></svg></span><span class="nm">Cube.004</span></div>

          <section class="panel p-transform">
            <div class="phead"><svg class="i11"><use href="#triD"/></svg><span>Transform</span><i class="grip"></i></div>
            <div class="xform">
              <div class="xcol c-loc"><div class="xlab">Location:</div><div class="nstack"><div class="num"><span>X: 0.833</span></div><div class="num"><span>Y: -0.910</span></div><div class="num"><span>Z: 0.562</span></div></div></div>
              <div class="xcol c-rot"><div class="xlab">Rotation:</div><div class="nstack"><div class="num"><span>X: 0°</span></div><div class="num"><span>Y: 0°</span></div><div class="num"><span>Z: 0°</span></div></div></div>
              <div class="xcol c-scl"><div class="xlab">Scale:</div><div class="nstack tight"><div class="num"><span>X: 0.04997</span></div><div class="num"><span>Y: 0.04872</span></div><div class="num"><span>Z: 0.02014</span></div></div></div>
            </div>
            <div class="rotmode"><span>Rotation Mode:</span><span class="wg drop rm"><span class="dl">XYZ Euler</span><svg class="ud"><use href="#ud"/></svg></span></div>
          </section>
          <section class="panel closed"><div class="phead"><svg class="i11"><use href="#triR"/></svg><span>Delta Transform</span><i class="grip"></i></div></section>
          <section class="panel closed"><div class="phead"><svg class="i11"><use href="#triR"/></svg><span>Transform Locks</span><i class="grip"></i></div></section>
          <section class="panel p-rel">
            <div class="phead"><svg class="i11"><use href="#triD"/></svg><span>Relations</span><i class="grip"></i></div>
            <div class="rel">
              <div class="rel-l">
                <div class="xlab">Layers:</div>
                <div class="layrow"><span class="layers tall"><i class="on"></i><i></i><i></i><i></i><i></i><i></i><i></i><i></i><i></i><i></i></span><span class="layers tall"><i></i><i></i><i></i><i></i><i></i><i></i><i></i><i></i><i></i><i></i></span></div>
                <div class="nrow pass"><span class="num cell w-full"><span>Pass Index: 0</span></span></div>
              </div>
              <div class="rel-r">
                <div class="xlab">Parent:</div>
                <div class="parentf"><svg class="i14"><use href="#cube"/></svg></div>
                <span class="wg drop dim objd"><span class="dl">Object</span><svg class="ud"><use href="#udg"/></svg></span>
              </div>
            </div>
          </section>
          <section class="panel p-grp">
            <div class="phead"><svg class="i11"><use href="#triD"/></svg><span>Groups</span><i class="grip"></i></div>
            <div class="addg"><span class="ag">Add to Group</span><span class="ic mid w20"><svg class="i14"><use href="#plus"/></svg></span></div>
          </section>
          <section class="panel p-disp">
            <div class="phead"><svg class="i11"><use href="#triD"/></svg><span>Display</span><i class="grip"></i></div>
            <div class="disp">
              <div class="drow1">
                <span class="dlab">Type:</span>
                <span class="wg drop tex"><span class="dl">Textured</span><svg class="ud"><use href="#ud"/></svg></span>
                <label class="chk-row bnd"><i class="chk"></i><span>Bounds</span></label>
                <span class="wg drop dim box"><span class="dl">Box</span><svg class="ud"><use href="#udg"/></svg></span>
              </div>
              <div class="dgrid">
                <label class="chk-row"><i class="chk"></i><span>Name</span></label><label class="chk-row"><i class="chk"></i><span>Texture Space</span></label>
                <label class="chk-row"><i class="chk"></i><span>Axis</span></label><label class="chk-row"><i class="chk"></i><span>X-Ray</span></label>
                <label class="chk-row"><i class="chk"></i><span>Wire</span></label><label class="chk-row"><i class="chk"></i><span>Transparency</span></label>
              </div>
              <div class="xlab ocl">Object Color:</div>
              <div class="swatch"></div>
            </div>
          </section>
          <section class="panel p-dup">
            <div class="phead"><svg class="i11"><use href="#triD"/></svg><span>Duplication</span><i class="grip"></i></div>
            <div class="dupes"><span class="on">None</span><span>Frames</span><span>Verts</span><span>Faces</span><span>Group</span></div>
          </section>
          <section class="panel closed"><div class="phead"><svg class="i11"><use href="#triR"/></svg><span>Animation Hacks</span><i class="grip"></i></div></section>
          <section class="panel closed"><div class="phead"><svg class="i11"><use href="#triR"/></svg><span>Motion Paths</span><i class="grip"></i></div></section>
          <section class="panel closed"><div class="phead"><svg class="i11"><use href="#triR"/></svg><span>Custom Properties</span><i class="grip"></i></div></section>
        </div>
      </div>
    </div>
  </main>

  <footer class="dock">
    <i class="shelf"></i>
    <div class="dock-items">
      <span class="di run"><svg viewBox="0 0 32 32"><rect x="3" y="3" width="26" height="26" rx="2" fill="#89a9e8"/><rect x="16" y="3" width="13" height="26" fill="#c7d6f4"/><path d="M17 3c-3 8-4 13-3 16h4c0 4-1 7 0 10M7 11v3M22 11v3M8 21c5 3 12 3 17-1" fill="none" stroke="#1a2038" stroke-width="1.400"/></svg></span>
      <span class="di"><svg viewBox="0 0 32 32"><circle cx="16" cy="15" r="14" fill="url(#gBlue)" stroke="#cfd8e4"/><path d="M10 23L18 8M22 23L14 8M8 18h16" stroke="#fff" stroke-width="2.200"/></svg></span>
      <span class="di"><svg viewBox="0 0 32 32"><circle cx="16" cy="15" r="14" fill="#222" stroke="#999"/><circle cx="16" cy="15" r="10.500" fill="#383838"/><path d="M16 17L14 5" stroke="#e02020" stroke-width="1.500"/><path d="M7 22l3-2M25 22l-3-2M5 13l3 1M27 13l-3 1" stroke="#eee"/><circle cx="16" cy="18" r="2.500" fill="#ccc"/></svg></span>
      <span class="di"><svg viewBox="0 0 32 32"><g transform="rotate(-6 16 16)"><rect x="3" y="5" width="26" height="24" fill="#f4f4f4" stroke="#bbb"/><rect x="3" y="5" width="26" height="7" fill="#c8332b"/><text x="16" y="26" class="dt d1">21</text></g></svg></span>
      <span class="di"><svg viewBox="0 0 32 32"><rect x="3" y="3" width="26" height="26" rx="2" fill="#c8c8c8" stroke="#888"/><rect x="5" y="9" width="22" height="18" fill="#55585c"/><circle cx="16" cy="18" r="7" fill="none" stroke="#b8b8b8" stroke-width="3" stroke-dasharray="3 1.500"/><circle cx="16" cy="18" r="3" fill="#aaa"/></svg></span>
      <span class="di run"><svg viewBox="0 0 32 32"><polygon points="4,7 20,3 25,27 7,29" fill="#4f8ce0"/><path d="M8 24L15 8l7 15M11 19h9" stroke="#a8cdf5" fill="none"/><path d="M27 6L13 30" stroke="#222" stroke-width="3"/><path d="M20 5h9l-1 5-6-1z" fill="#555"/></svg></span>
      <span class="di"><svg viewBox="0 0 32 32"><polygon points="3,8 18,6 22,28 6,28" fill="#efe9d8" stroke="#aaa"/><path d="M7 12l8-1M7 16l8-1" stroke="#d08030"/><polygon points="23,3 31,29 12,29" fill="#e2b430" stroke="#9a7614"/><polygon points="23,15 26,26 18,26" fill="#efe9d8"/></svg></span>
      <span class="di"><svg viewBox="0 0 32 32"><path d="M3 7L28 2l2 24-27 4z" fill="#88aee2" stroke="#d9e5f4"/><path d="M9 18c0-8 13-9 14-2 0 6-9 7-9 2 0-3 5-3 5 0M7 23c8 3 16 2 19-7" fill="none" stroke="#f0f4fa" stroke-width="2.200"/></svg></span>
      <span class="di"><svg viewBox="0 0 32 32"><rect x="2" y="3" width="28" height="27" fill="#111" stroke="#aaa" stroke-width="1.500"/><rect x="3" y="4" width="26" height="3" fill="#555"/><path d="M5 10l3 2-3 2M9 15h4" stroke="#ddd" fill="none"/></svg></span>
      <span class="di"><svg viewBox="0 0 32 32"><rect x="2" y="3" width="28" height="27" fill="#0f2a28" stroke="#aaa" stroke-width="1.500"/><path d="M4 12h24M4 20h24M11 5v23M21 5v23" stroke="#1e4a44"/><path d="M3 18h8l2-7 3 12 2-7 2 2h9" fill="none" stroke="#3fd890" stroke-width="1.300"/></svg></span>
      <span class="di"><svg viewBox="0 0 32 32"><rect x="3" y="14" width="22" height="15" rx="1" fill="#a8a8a8" stroke="#555"/><circle cx="13" cy="20" r="5" fill="#d2d2d2" stroke="#666"/><path d="M9 14V5c0-3 6-3 6 0M24 3c6 0 7 8 2 12l-4 5" fill="none" stroke="#777" stroke-width="1.500"/></svg></span>
      <span class="di"><svg viewBox="0 0 32 32"><polygon points="5,25 20,2 30,21 22,30" fill="#5ca5e8"/><polygon points="12,19 20,4 28,20 21,27" fill="#dde7f2"/><path d="M6 26l16 4" stroke="#2f6fb8" stroke-width="2"/></svg></span>
      <span class="di"><svg viewBox="0 0 32 32"><polygon points="16,1 29,8 29,23 16,31 3,23 3,8" fill="#2d5a8e"/><polygon points="16,1 29,8 16,15 3,8" fill="#dfe7ee"/><polygon points="3,8 16,15 16,31 3,23" fill="#f3f5f7"/><path d="M8 14l4 2v5l-4-2zM20 17l5-3v5l-5 3z" fill="#4c7fb2"/></svg></span>
      <span class="di"><svg viewBox="0 0 32 32"><polygon points="4,6 24,2 29,26 9,30" fill="#f2f2ec" stroke="#bbb"/><path d="M9 10l14-3M10 14l14-3M11 18l14-3M12 22l14-3" stroke="#aaa"/><path d="M3 20l6 9-2 1z" fill="#eec860"/></svg></span>
      <span class="di"><svg viewBox="0 0 32 32"><rect x="3" y="3" width="26" height="26" rx="1" fill="#9c2f1e"/><text x="15" y="24" class="dt d2">g</text></svg></span>
      <span class="di"><svg viewBox="0 0 32 32"><rect x="9" y="6" width="14" height="23" rx="2" fill="#47aee8"/><rect x="11" y="9" width="10" height="16" fill="#9ad8f8"/><path d="M28 3l-9 14" stroke="#fff" stroke-width="3"/><rect x="18" y="2" width="10" height="6" fill="#ddd" transform="rotate(20 23 5)"/></svg></span>
      <span class="di run"><svg viewBox="0 0 32 32"><circle cx="16" cy="16" r="14" fill="url(#gBlue)" stroke="#dfe8f0" stroke-width="1.500"/><path d="M13 21V10l8-2v10" fill="none" stroke="#0a2a5a" stroke-width="2"/><ellipse cx="11" cy="21" rx="3" ry="2.300" fill="#0a2a5a"/><ellipse cx="19" cy="18" rx="3" ry="2.300" fill="#0a2a5a"/></svg></span>
      <span class="di"><svg viewBox="0 0 32 32"><circle cx="15" cy="15" r="13" fill="#2b3e5c" stroke="#a9c0dc" stroke-width="2"/><circle cx="15" cy="15" r="6" fill="#7fb4ee"/><path d="M19 19l9 10" stroke="#1a2a44" stroke-width="3.500"/></svg></span>
      <span class="di run"><svg viewBox="0 0 32 32"><circle cx="16" cy="15" r="14" fill="url(#gOrb)"/><path d="M6 22c8 4 18 1 22-8" fill="none" stroke="#2c2a70" stroke-width="3"/></svg></span>
      <span class="di"><svg viewBox="0 0 32 32"><circle cx="16" cy="16" r="14" fill="#dfe3e6" stroke="#888"/><circle cx="16" cy="16" r="11" fill="#5aa6ea"/><polygon points="22,9 18,18 10,23 14,14" fill="#fff"/><polygon points="22,9 14,14 18,18" fill="#d83a2a"/></svg></span>
      <span class="di"><svg viewBox="0 0 32 32"><circle cx="16" cy="16" r="14" fill="#35b8ec"/><circle cx="9" cy="8" r="7" fill="#35b8ec"/><circle cx="23" cy="24" r="7" fill="#35b8ec"/><text x="16" y="24" class="dt d3">S</text></svg></span>
      <span class="di"><svg viewBox="0 0 32 32"><circle cx="16" cy="16" r="14" fill="#2868d8"/><path d="M3 15c8-6 18-6 26-2v4c-8-3-18-3-26 3zM5 8c6-5 14-5 20-1-8-1-14 0-20 4zM7 26c6-3 14-4 20-2-6 6-15 7-20 2z" fill="#f0f4fb"/></svg></span>
      <span class="di"><svg viewBox="0 0 32 32"><path d="M4 8c4-5 20-7 25-3 1 10-4 21-13 26C9 25 4 17 4 8z" fill="#191919"/><path d="M12 8l14-3" stroke="#eee" stroke-width="2"/><text x="15" y="23" class="dt d4">gp6</text></svg></span>
      <span class="di"><svg viewBox="0 0 32 32"><polygon points="3,7 26,2 29,26 7,30" fill="#5a7ea8" stroke="#ddd"/><rect x="7" y="4" width="19" height="7" fill="#ddd" transform="rotate(-8 16 7)"/><text x="6" y="11" class="dt d5">COMIC</text><rect x="10" y="13" width="13" height="12" fill="#c05050"/><circle cx="16" cy="17" r="3" fill="#eed"/></svg></span>
      <span class="di"><svg viewBox="0 0 32 32"><circle cx="16" cy="17" r="13" fill="#101018" stroke="#3a4a88" stroke-width="1.500"/><path d="M8 18c0-7 9-10 15-6-6-1-9 2-9 6 0 3 5 5 11 3-4 5-17 6-17-3z" fill="#e89a20"/><circle cx="17" cy="15" r="5" fill="#3b6ea8"/><path d="M9 2l6 9" stroke="#c48a40" stroke-width="1.500"/></svg></span>
      <span class="di"><svg viewBox="0 0 32 32"><circle cx="16" cy="17" r="13" fill="#101018" stroke="#3a4a88" stroke-width="1.500"/><circle cx="16" cy="18" r="10" fill="#3a5a92"/><circle cx="12" cy="17" r="3" fill="#eee"/><circle cx="21" cy="18" r="3" fill="#eee"/><circle cx="15" cy="23" r="2.500" fill="#111"/><path d="M9 2l6 9" stroke="#c48a40" stroke-width="1.500"/></svg></span>
      <span class="di"><svg viewBox="0 0 32 32"><path d="M28 2c-1 7-4 10-8 13 2 1 3 1 5 0-1 4-5 6-8 6l1 6 4 2H9l4-3-3-4c-3 0-5-1-7-2 5 0 9-3 11-6C18 10 23 6 28 2z" fill="#d84638"/></svg></span>
      <span class="di"><svg viewBox="0 0 32 32"><polygon points="3,22 30,14 30,30 3,30" fill="#e8e8e8"/><rect x="3" y="25" width="26" height="5" fill="#111" opacity=".85"/><polygon points="15,1 24,24 6,24" fill="#d8262a"/><polygon points="15,10 19,20 12,20" fill="#fff" opacity=".5"/></svg></span>
      <span class="di"><svg viewBox="0 0 32 32"><rect x="2" y="3" width="28" height="27" fill="#20242a"/><rect x="6" y="4" width="4" height="14" fill="#3d7ee0"/><rect x="14" y="7" width="4" height="11" fill="#3d7ee0"/><rect x="20" y="3" width="4" height="9" fill="#38b050"/><rect x="24" y="12" width="4" height="8" fill="#38b050"/><path d="M3 22h26v8H3z" fill="#f2f2f2"/><path d="M7 22v8M12 22v8M17 22v8M22 22v8M27 22v8" stroke="#111"/></svg></span>
      <span class="di"><svg viewBox="0 0 32 32"><circle cx="16" cy="16" r="14" fill="#d2361a" stroke="#7a1d10"/><path d="M23 8c-7 0-8 3-9 8s-2 8-8 8" fill="none" stroke="#fff" stroke-width="2.800"/><path d="M12 15h8" stroke="#fff" stroke-width="2.400"/></svg></span>
      <span class="di run"><svg viewBox="0 0 32 32"><rect x="3" y="2" width="27" height="28" fill="#1c4f8c"/><rect x="3" y="2" width="27" height="28" fill="none" stroke="#5fb0e8"/><text x="16" y="22" class="dt d6">Ps</text></svg></span>
      <span class="di run"><svg viewBox="0 0 32 32"><path d="M2 14l10-1-7-5 10 1 5-2c7 1 10 7 8 13-2 5-8 8-14 6-4-1-6-5-5-9l-7-3z" fill="#ee8a20"/><circle cx="19" cy="17" r="6.500" fill="#fff"/><circle cx="19" cy="17" r="4.200" fill="#3f7fd0"/></svg></span>
      <span class="di"><svg viewBox="0 0 32 32"><polygon points="16,2 30,17 22,28 5,22 2,13" fill="#eaeaea" stroke="#111" stroke-width="2"/><path d="M7 16L25 8 20 26z" fill="#121212"/><path d="M14 15l5-2-1 6z" fill="#eee"/></svg></span>
      <span class="di"><svg viewBox="0 0 32 32"><text x="16" y="26" class="dt d7">W</text></svg></span>
      <span class="di"><svg viewBox="0 0 32 32"><path d="M8 29V4h11c9 0 9 14 0 14h-6v11z" fill="#e8642a"/><path d="M13 9v5h5c3 0 3-5 0-5z" fill="#8a7060"/></svg></span>
      <span class="di"><svg viewBox="0 0 32 32"><path d="M6 3l10 11L26 3l3 3-10 11 10 12-4 1-9-11-8 11-3-2 8-11L4 6z" fill="#3ba53b"/></svg></span>
      <span class="di"><svg viewBox="0 0 32 32"><circle cx="16" cy="16" r="14" fill="#d8d8d8"/><path d="M5 22c3-10 7-5 9-12 3 5 6 3 7 8 3-2 5 0 6 4-5 9-18 9-22 0z" fill="#e8941a"/><circle cx="16" cy="16" r="4" fill="#eee" stroke="#aaa"/></svg></span>
      <span class="di"><svg viewBox="0 0 32 32"><circle cx="16" cy="16" r="14" fill="#e6eaea" stroke="#999" stroke-width="1.500"/><circle cx="16" cy="16" r="10.500" fill="#f6f6f6" stroke="#bbb"/><path d="M18 19l-7-9" stroke="#d03a2a" stroke-width="1.500"/><path d="M9 20a8 8 0 0 1 14 0" fill="none" stroke="#7ab8a0"/></svg></span>
      <span class="di"><svg viewBox="0 0 32 32"><circle cx="16" cy="16" r="14" fill="#f4f4f4" stroke="#bbb"/><circle cx="16" cy="16" r="11.500" fill="#1f8e3d"/><path d="M10 9v8c0 6 8 6 9 1V9M19 8v12M23 9v10" fill="none" stroke="#fff" stroke-width="2.400"/></svg></span>
      <span class="di"><svg viewBox="0 0 32 32"><polygon points="3,9 27,3 30,25 6,29" fill="#333"/><polygon points="3,9 27,3 28,8 4,14" fill="#555"/><circle cx="23" cy="16" r="4" fill="none" stroke="#ddd" stroke-width="1.800"/><path d="M7 22l13-5" stroke="#ddd" stroke-width="2"/></svg></span>
      <span class="di run"><svg viewBox="0 0 32 32"><ellipse cx="16" cy="16" rx="14" ry="15" fill="#8dba3a"/><text x="16" y="15" class="dt d8">Server</text><text x="16" y="24" class="dt d9">unc</text></svg></span>
      <span class="di run"><svg viewBox="0 0 32 32"><polygon points="3,9 22,3 27,26 9,30" fill="#f2f2ee" stroke="#bbb"/><path d="M25 5L17 26l-2 4 4-2 9-22z" fill="#e8b830" stroke="#8a6a1c" stroke-width=".6"/></svg></span>
      <span class="di run"><svg viewBox="0 0 32 32"><rect x="3" y="5" width="26" height="24" fill="#f2f2f2" stroke="#999"/><rect x="6" y="8" width="20" height="18" fill="#777"/><path d="M9 3l14 26M23 3L9 29" stroke="#ddd" stroke-width="2"/><circle cx="10" cy="28" r="2" fill="none" stroke="#333"/><circle cx="22" cy="28" r="2" fill="none" stroke="#333"/></svg></span>
      <span class="di run"><svg viewBox="0 0 32 32"><polygon points="3,7 24,2 29,24 8,29" fill="#f4f4f4" stroke="#ccc"/><polygon points="5,9 23,4 27,22 9,27" fill="#7aa3cf"/><polygon points="5,16 17,10 25,21 9,27" fill="#a06a3a"/><circle cx="15" cy="16" r="4" fill="#2a2a3a"/><circle cx="25" cy="24" r="5" fill="#333" stroke="#aaa"/></svg></span>
      <span class="dock-sep"><i></i><i></i><i></i><i></i><i></i></span>
      <span class="di"><svg viewBox="0 0 32 32"><path d="M2 6h11l3 4h14v19H2z" fill="url(#gFolder)"/><path d="M10 25l6-14 6 14M12 20h8" stroke="#5a88b8" stroke-width="1.500" fill="none"/></svg></span>
      <span class="di"><svg viewBox="0 0 32 32"><rect x="3" y="2" width="26" height="28" fill="#f4f4f4" stroke="#ccc"/><path d="M6 6h20M6 10h10M6 14h14M6 18h8M6 22h10" stroke="#999"/><rect x="6" y="15" width="8" height="2" fill="#7aa8ee"/><rect x="6" y="24" width="6" height="2" fill="#7aa8ee"/></svg></span>
      <span class="di"><svg viewBox="0 0 32 32"><path d="M4 5h24l-3 25H7z" fill="#565656" stroke="#bbb"/><ellipse cx="16" cy="6" rx="12" ry="4" fill="#777" stroke="#aaa"/><path d="M9 6c3-4 5 1 8-3 3 0 5 2 6 4-4 5-10 5-14-1z" fill="#eaeaea"/><path d="M11 12l1 15M16 12v15M21 12l-1 15" stroke="#888"/></svg></span>
    </div>
  </footer>
</div>
</body>
</html>
```
FILE: styles.css
```css
*{box-sizing:border-box;margin:0;padding:0}
html,body{width:1920px;height:1080px;overflow:hidden;background:#fff}
body{font-family:"DejaVu Sans",sans-serif;font-size:10.5px;color:#0c0c0c}
i{display:block;font-style:normal}
svg{display:block;flex:none}
button{font:inherit;border:0;color:inherit}
.defs{position:absolute}
.screen{display:grid;grid-template-rows:22px 1007px 51px;width:1920px;height:1080px;overflow:hidden}
.i11{width:11px;height:11px}
.i13{width:13px;height:13px}
.i14{width:14px;height:14px}

/* menu bar */
.menubar{display:flex;align-items:center;padding-left:20px;font-family:"Noto Sans",sans-serif;color:#111;font-size:14px;
  background:linear-gradient(180deg,rgba(255,255,255,.3),rgba(0,0,0,.06)),linear-gradient(90deg,#c9c9c9 0,#c6c6c6 120px,#f7f7f7 165px,#d0d0d0 260px,#c4c4c4 800px,#e0e0e0 855px,#9c9c9c 870px,#b5b5b5 960px,#cdd2d2 1040px,#e4e8e8 1120px,#c0c0c0 1140px,#888 1160px,#858585 1185px,#e0e0e0 1200px,#cfcfcf 1500px,#d5d5d5 1920px)}
.apple{width:15px;height:17px}
.mb-app{margin-left:19px;font-weight:700;width:73px}
.mb-item{width:60px}
.mb-right{margin-left:auto;display:flex;align-items:center;height:22px;padding-right:21px}
.mb-i{width:16px;height:16px}
.a6{margin-left:12px}.a7{margin-left:13px}.a8{margin-left:16px;width:17px}.a9{margin-left:15px;width:12px}.a10{margin-left:17px}.a11{margin-left:12px;width:18px}.a12{margin-left:16px}
.mb-clock{margin-left:13px;width:78px;white-space:nowrap;font-size:14px;letter-spacing:.55px}

/* window */
.window{display:flex;flex-direction:column;border-top:1px solid #000;background:#6f6f6f;min-height:0;border-bottom:1px solid #2a2a2a}
.titlebar{height:20px;display:flex;align-items:center;justify-content:center;background:linear-gradient(#d2d2d2,#a6a6a6);position:relative;border-bottom:1px solid #5a5a5a;flex:none}
.lights{position:absolute;left:8px;top:3px;display:flex;gap:7px}
.lt{width:14px;height:14px;border-radius:50%;border:1px solid rgba(0,0,0,.35)}
.red{background:radial-gradient(circle at 50% 75%,#ffb0a8,#e23b32 55%,#a81c16)}
.amber{background:radial-gradient(circle at 50% 75%,#ffe9a0,#f0a32c 55%,#b06c10)}
.green{background:radial-gradient(circle at 50% 75%,#d8f8a8,#6fbb38 55%,#3e7c16)}
.title{display:flex;align-items:center;gap:6px;font-family:"DejaVu Sans",sans-serif;font-size:12.500px;color:#1c1c1c}
.fileic{width:13px;height:17px}

/* headers */
.hdr{height:28px;flex:none;display:flex;align-items:center;padding-left:9px;background:#6f6f6f;border-top:1px solid #8a8a8a;border-bottom:1px solid #111;position:relative;white-space:nowrap}
.hatch-b::before{content:"";position:absolute;left:0;bottom:0;width:13px;height:13px;background:repeating-linear-gradient(135deg,#b0b0b0 0 1px,#333 1px 3px);clip-path:polygon(0 0,100% 100%,0 100%)}
.hatch-tr{position:absolute;right:0;top:0;width:11px;height:11px;background:repeating-linear-gradient(135deg,#b0b0b0 0 1px,#333 1px 3px);clip-path:polygon(0 0,100% 0,100% 100%)}
.sel{width:30px;height:19px;flex:none;display:flex;align-items:center;justify-content:center;gap:1px;border-radius:5px;border:1px solid #262626;background:linear-gradient(#585858,#2e2e2e)}
.ud{width:8px;height:14px}
.mn{width:12px;height:12px;margin-left:7px}
.mi{display:block;color:#101010;line-height:19px}
.w19{width:19px}.w20{width:20px}.w31{width:31px}.w33{width:33px}.w34{width:34px}.w35{width:35px}.w37{width:37px}.w38{width:38px}.w39{width:39px}.w42{width:42px}.w43{width:43px}.w46{width:46px}.w47{width:47px}.w48{width:48px}.w49{width:49px}.w53{width:53px}.w54{width:54px}.w59{width:59px}.w89{width:89px}.w105{width:105px}.w110{width:110px}.w111{width:111px}.w115{width:115px}.w118{width:118px}.w120{width:120px}.w125{width:125px}.w145{width:145px}.w148{width:148px}.w191{width:191px}.w226{width:226px}
.ml5{margin-left:5px}.ml6{margin-left:6px}.ml7{margin-left:7px}.ml9{margin-left:9px}.ml10{margin-left:10px}.ml12{margin-left:12px}.ml13{margin-left:13px}.ml17{margin-left:17px}.ml18{margin-left:18px}
.wg{display:flex;height:19px;flex:none;border:1px solid #2b2b2b;border-radius:5px;overflow:hidden;align-items:stretch}
.ic{display:flex;align-items:center;justify-content:center;flex:none;border-left:1px solid #2b2b2b}
.ic:first-child{border-left:0}
.dark{background:linear-gradient(#5a5a5a,#2f2f2f);color:#eee}
.lite{background:linear-gradient(#9d9d9d,#6f6f6f)}
.mid{background:linear-gradient(#a0a0a0,#707070)}
.cgap{gap:2px}
.txt{display:flex;align-items:center;padding-left:4px;flex:none;background:linear-gradient(#969696,#bdbdbd);color:#111;border-left:1px solid #2b2b2b}
.drop{align-items:center;justify-content:space-between;padding:0 4px;background:linear-gradient(#585858,#2e2e2e);color:#ececec}
.dl{flex:1;white-space:nowrap}
.lead{margin-right:2px;margin-left:1px}
.dropin{flex:1;justify-content:space-between;padding:0 4px}
.stats{width:485px;padding-left:21px;color:#101010;letter-spacing:-.15px}

.layers{display:grid;grid-template-columns:repeat(5,1fr);grid-template-rows:1fr 1fr;height:19px;flex:none;border:1px solid #2b2b2b;border-radius:5px;overflow:hidden;background:#2b2b2b;gap:1px}
.layers i{background:linear-gradient(#a0a0a0,#7d7d7d)}
.layers i.on{background:#5a5a5a}
.h3d .layers i.on{background:#70553c}

/* layout */
.work{flex:1;display:grid;grid-template-columns:1609px 311px;min-height:0}
.work-left{display:flex;flex-direction:column;min-height:0}
.work-right{display:flex;flex-direction:column;min-height:0;border-left:1px solid #000;background:#727272}
.view-row{display:flex;height:815px;flex:none}
.h3d{height:27px}
.htl{height:27px;border-bottom:0;border-top:1px solid #8a8a8a;margin-top:2px}

/* tool shelf */
.tools{width:160px;flex:none;display:flex;flex-direction:column;background:linear-gradient(90deg,#777,#737373);border-right:2px solid #8b8b8b}
.tool-top{flex:1;padding:0 0 0 9px;min-height:0}
.tool-head{height:28px;display:flex;align-items:center;gap:6px;font-size:11.200px;margin-left:-1px;padding-right:7px}
.tool-head span{flex:1;white-space:nowrap}
.grip{width:17px;height:17px;flex:none;background:repeating-linear-gradient(135deg,#949494 0 1px,transparent 1px 3px);clip-path:polygon(100% 100%,0 0,30% 0,100% 70%)}
.tsec{margin-top:9.200px}
.tsec.first{margin-top:8px}
.tlab{height:14px;line-height:14px;margin-bottom:2.300px;padding-left:4px}
.bgroup{width:126px;border:1px solid #2b2b2b;border-radius:5px;overflow:hidden;background:#2b2b2b;display:flex;flex-direction:column;gap:1px}
.bgroup.row{flex-direction:row}
.bgroup.single.origin{margin-top:6px}
.tb{height:18.400px;line-height:18px;padding-left:4px;background:linear-gradient(#a6a6a6,#737373);white-space:nowrap;overflow:hidden}
.bgroup.row .tb,.single .tb{height:17.500px;line-height:17px}
.k1{width:61px}.k2{flex:1}.g1{width:39px}.g2{width:44px}.g3{flex:1}
.chk-row{display:flex;align-items:center;gap:6px;white-space:nowrap}
.chk{width:13px;height:13px;flex:none;border:1px solid #2e2e2e;border-radius:3px;background:linear-gradient(#464646,#5e5e5e)}
.sketch{margin:3px 0 0 2px;width:150px;gap:6px;overflow:hidden}
.tool-bot{height:215px;flex:none;border-top:1px solid #8a8a8a;display:flex;padding-left:8px;overflow:hidden;position:relative}
.bot-main{width:135px}
.tool-head.sub{margin-left:2px;padding-right:0;gap:3px}
.big{font-size:11.500px}
.tool-head.sub .grip{margin-left:-17px}
.bline{height:25px;line-height:25px;display:flex;align-items:center;width:135px}
.bline.t{padding-left:4px}
.bline.chk-row{padding-left:2px;gap:6px}
.bline.vec{height:21px;margin-top:0}
.bline.con{margin-top:4px;height:24px}
.nstack{width:126px;border:1px solid #2b2b2b;border-radius:9px;overflow:hidden;display:flex;flex-direction:column;gap:1px;background:#2b2b2b}
.num{height:18.300px;flex:none;display:flex;align-items:center;justify-content:space-between;padding:0 6px;background:linear-gradient(#9d9d9d,#b8b8b8);color:#111;white-space:nowrap}
.num::before,.num::after{content:"";width:0;height:0;border:solid transparent;border-width:3.500px 0;flex:none}
.num::before{border-right:5px solid #6a6a6a}
.num::after{border-left:5px solid #6a6a6a}
.tight .num{padding:0 3px}
.vscroll{width:13px;margin:4px 0 4px 0;height:207px;border-radius:7px;background:#616161;border:1px solid #444;flex:none;overflow:hidden}
.vthumb{height:84px;border-radius:7px;background:linear-gradient(90deg,#8d8d8d,#a6a6a6);border:1px solid #555}

/* viewport */
.viewport{flex:1;position:relative;background:#393939;overflow:hidden}
.scene3d{position:absolute;left:0;top:0;width:1449px;height:815px}
.vp-label{position:absolute;color:#f2f2f2;white-space:nowrap;font-size:10.500px}
.persp{left:22px;top:7px}
.obj{left:64px;top:795px;font-size:11px}
.vp-axis{position:absolute;font-size:11px}
.az{left:22px;top:761px;color:#2020e0}.ay{left:45px;top:771px;color:#10d010}.ax{left:45px;top:791px;color:#d01818}

/* timeline */
.timeline{height:74px;flex:none;display:flex;background:#6f6f6f}
.tl-before,.tl-after{background-color:#5e5e5e}
.tl-before{width:274px;flex:none;background-image:linear-gradient(90deg,#4e4e4e 0 1px,transparent 1px 23.500px,#565656 23.500px 24.500px,transparent 24.500px);background-size:47.080px 100%;background-position:13px 0}
.tl-cur{width:4px;background:linear-gradient(90deg,#3a3a3a 0 1px,#6f6f6f 1px 2px,#5bb834 2px);flex:none}
.tl-range{width:1172px;flex:none;background-image:linear-gradient(90deg,#535353 0 1px,transparent 1px 23.500px,#666 23.500px 24.500px,transparent 24.500px);background-size:47.080px 100%;background-position:42px 0}
.tl-after{flex:1}
.ruler{height:13px;flex:none;display:flex;align-items:center;margin:1px 3px 0 5px;border:1px solid #3a3a3a;border-radius:7px;background:linear-gradient(#7c7c7c,#9c9c9c);white-space:nowrap;overflow:hidden;padding-left:9.500px;position:relative;color:#111}
.ruler span{width:46.950px;flex:none;text-align:center}
.rbar{position:absolute;left:1px;top:1px;width:9px;height:9px;border-radius:50%;background:#555}
.nrow{display:flex;height:19px;flex:none;border:1px solid #2b2b2b;border-radius:9px;overflow:hidden;gap:0}
.cell{height:100%}
.cell+.cell{border-left:1px solid #2b2b2b}
.lead-key{padding-left:6px}
.transport .ic{flex:1}

/* outliner */
.houtl{height:27px;padding-left:8px;border-top:0}
.outliner{height:130px;flex:none;overflow:hidden;position:relative;margin-top:0}
.orow{height:20px;display:flex;align-items:center;padding-left:21px;background:#6c6c6c}
.orow:nth-child(odd){background:#747474;margin-top:0}
.orow:first-child{margin-top:-8px}
.oplus{width:12px;height:12px}
.ocon{width:9px;height:1px;background:#333}
.otri{width:14px;height:14px;margin-left:-1px}
.oname{width:76px;margin-left:5px;white-space:nowrap}
.otick{width:2px;height:10px;background:#3c3c3c}
.ogray{width:14px;height:14px;margin-left:10px;margin-right:74px}
.ocell{width:20px;height:20px;display:flex;align-items:center;padding-left:1px;border-left:1px solid #5a5a5a;flex:none}
.oscroll{position:absolute;left:295px;top:4px;width:12px;height:104px;border-radius:7px;background:#616161;border:1px solid #4c4c4c}
.othumb{margin-top:62px;height:28px;border-radius:6px;background:linear-gradient(90deg,#8d8d8d,#a2a2a2)}
.searchf{flex:1;height:19px;margin-left:6px;display:flex;align-items:center;padding-left:6px;background:linear-gradient(#969696,#bdbdbd);border:1px solid #2b2b2b;border-right:0;border-radius:5px 0 0 5px}
.hprop{height:28px;padding-left:8px;border-top:1px solid #111;border-bottom:1px solid #8a8a8a}
.ptabs{width:242px}
.ptab{width:22px;flex:none;display:flex;align-items:center;justify-content:center;background:linear-gradient(#6a6a6a,#484848);border-left:1px solid #2b2b2b}
.ptab:first-child{border-left:0}
.ptab.on{background:linear-gradient(#6f9bd8,#4a7cc0)}

/* properties */
.props{flex:1;padding:0 21px 0 4px;min-height:0;overflow:hidden}
.crumb{height:36px;display:flex;align-items:center;padding-left:6px}
.c2{margin-left:8px}.c3{margin-left:7px;width:0;height:0;border:solid transparent;border-width:3.500px 0;border-left:4px solid #333}.c4{margin-left:17px}
.crumb span{margin-left:2px;font-size:11px}
.namef{height:20px;width:278px;margin:7px 0 10px 3px;display:flex;border:1px solid #2b2b2b;border-radius:5px;overflow:hidden;background:linear-gradient(#969696,#bdbdbd)}
.nm{padding-left:5px;line-height:18px;font-size:11px}
.panel{border-top:1px solid #4d4d4d;box-shadow:inset 0 1px 0 #8c8c8c}
.panel.closed{height:24px}
.phead{height:22px;display:flex;align-items:center;gap:4px;padding-left:5px;font-size:11.500px;color:#151515}
.phead span{flex:1}
.phead .grip{margin-right:2px}
.panel .xform,.panel .rotmode,.panel .rel,.panel .addg,.panel .disp,.panel .dupes{margin-left:3px}
.p-transform{height:146px}
.xform{display:flex;gap:9px;padding-top:11px;width:278px}
.c-loc{width:86px}.c-rot{width:86px}.c-scl{width:88px}
.xcol .nstack{width:100%}
.xlab{height:16px;line-height:14px;padding-left:5px}
.rotmode{display:flex;align-items:center;height:20px;margin-top:6px;width:278px;padding-left:5px}
.rotmode>span:first-child{width:92px;white-space:nowrap}
.rm{flex:1;height:20px}
.p-rel{height:122px}
.rel{display:flex;gap:9px;padding-top:10px;width:278px}
.rel .xlab{height:18px}
.rel-l{width:134px}.rel-r{flex:1}
.layrow{display:flex;gap:6px;margin-top:0}
.layers.tall{width:64px;height:30px}
.pass{width:134px;margin-top:11px;height:19px}
.w-full{width:100%}
.parentf{height:20px;border:1px solid #2b2b2b;border-radius:5px;background:linear-gradient(#969696,#bdbdbd);display:flex;align-items:center;padding-left:4px}
.objd{margin-top:2px;width:100%;height:20px}
.dim{background:linear-gradient(#6a6a6a,#565656);color:#aaa;border-color:#4a4a4a}
.p-grp{height:60px}
.addg{display:flex;width:278px;height:20px;margin-top:6px;border:1px solid #2b2b2b;border-radius:5px;overflow:hidden}
.ag{flex:1;text-align:center;line-height:18px;background:linear-gradient(#a6a6a6,#7b7b7b)}
.p-disp{height:171px}
.drow1{display:flex;align-items:center;padding-top:6px;height:26px}
.dlab{width:49px;padding-left:5px}
.tex{width:86px;height:20px}
.bnd{width:69px;margin-left:11px;gap:5px}
.box{width:63px;height:20px}
.dgrid{display:grid;grid-template-columns:143px 135px;grid-auto-rows:22px;padding:5px 0 0 3px;margin-left:0;width:281px}
.dgrid .chk-row{gap:5px;height:22px}
.ocl{margin-top:4px;height:15px;padding-top:1px;line-height:13px}
.swatch{width:135px;height:19px;margin-top:2px;border:1px solid #2b2b2b;border-radius:5px;background:#fff}
.p-dup{height:60px}
.dupes{display:grid;grid-template-columns:54.700px repeat(4,55px);width:278px;height:20px;margin-top:6px;border:1px solid #2b2b2b;border-radius:5px;overflow:hidden;text-align:center;line-height:19px}
.dupes span{background:linear-gradient(#585858,#2e2e2e);color:#ececec;border-left:1px solid #1e1e1e}
.dupes .on{background:linear-gradient(#6d98d8,#4374bc);color:#111;border-left:0}

/* dock */
.dock{position:relative;overflow:hidden;background:linear-gradient(180deg,rgba(0,0,0,.72),rgba(0,0,0,.3) 12px,rgba(0,0,0,0) 32px),linear-gradient(90deg,#fff 0,#fff 300px,#c4c1bc 520px,#a29c92 700px,#7d7467 900px,#85796a 1200px,#9a9389 1450px,#d8d8d8 1640px,#fff 1790px,#fff 100%)}
.shelf{position:absolute;left:161px;top:24px;width:1596px;height:27px;background:linear-gradient(180deg,rgba(190,190,190,.55),rgba(150,150,150,.65) 70%,#c8c8c8 72%,#8b8b8b 94%,#eee 95%);clip-path:polygon(21px 0,1572px 0,100% 100%,0 100%)}
.dock-items{position:relative;display:flex;height:51px;padding:8px 0 0 178px;align-items:flex-start}
.di{width:33px;height:30px;flex:none;display:flex;justify-content:center;position:relative}
.di svg{width:30px;height:30px}
.run::after{content:"";position:absolute;left:14px;top:37px;width:5px;height:3px;border-radius:50%;background:#dff2ff;box-shadow:0 0 4px 2px rgba(120,190,255,.9)}
.dock-sep{width:18px;height:34px;flex:none;display:flex;flex-direction:column;justify-content:flex-end;gap:3px;align-items:center;margin-top:4px}
.dock-sep i{width:14px;height:3px;background:rgba(240,240,240,.65)}
.dt{text-anchor:middle;font-family:"Liberation Sans",sans-serif;font-weight:700}
.d1{font-size:15px;fill:#111}
.d2{font-family:"Liberation Serif",serif;font-style:italic;font-size:28px;fill:#f4eee4}
.d3{font-size:22px;fill:#fff}
.d4{font-size:10px;fill:#eee}
.d5{font-size:6px;text-anchor:start;fill:#223}
.d6{font-size:18px;fill:#7fc4f0}
.d7{font-size:26px;fill:#3d8ce0}
.d8{font-size:7px;fill:#c8201c;font-family:"Liberation Serif",serif}
.d9{font-size:8px;fill:#111}
```
